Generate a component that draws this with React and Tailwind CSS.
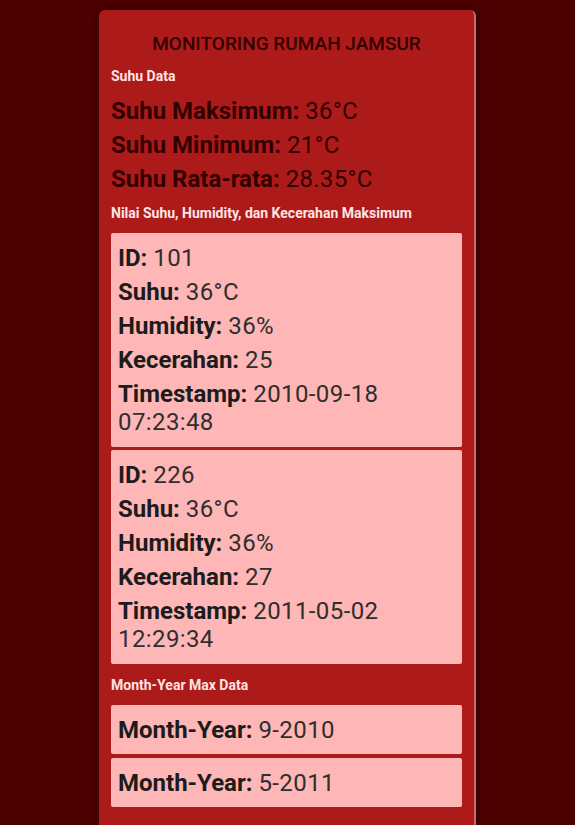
import React from "react";

const suhu = [
  { label: "Suhu Maksimum:", value: "36°C" },
  { label: "Suhu Minimum:", value: "21°C" },
  { label: "Suhu Rata-rata:", value: "28.35°C" },
];

const maxData = [
  { id: 101, suhu: 36, humidity: 36, kecerahan: 25, timestamp: "2010-09-18 07:23:48" },
  { id: 226, suhu: 36, humidity: 36, kecerahan: 27, timestamp: "2011-05-02 12:29:34" },
];

const monthYear = ["9-2010", "5-2011"];

const Row = ({ label, value }) => (
  <p className="leading-[28px]">
    <strong className="font-bold text-[#1c1c1c]">{label}</strong>{" "}
    <span className="text-[#2e2e2e] tracking-[0.4px]">{value}</span>
  </p>
);

export default function App() {
  return (
    <div
      className="min-h-screen bg-[#4d0000] flex justify-center pt-[10px] overflow-hidden"
      style={{ fontFamily: "Roboto, 'Noto Sans', sans-serif" }}
    >
      <div className="w-[377px] bg-[#ad1a1a] rounded-t-md border-r-2 border-[#c86a6a] shadow-[0_0_8px_rgba(0,0,0,0.5)] px-3 pt-[22px] pb-6">
        <h1 className="text-center text-[19px] leading-6 font-medium text-[#330000]">
          MONITORING RUMAH JAMSUR
        </h1>

        <h2 className="mt-[11px] text-[14px] leading-[18px] font-bold text-[#ffe4e4]">Suhu Data</h2>
        <div className="mt-3 flex flex-col gap-[6px] text-[24px] text-[#330000]">
          {suhu.map((s) => (
            <p key={s.label} className="leading-[28px]">
              <strong className="font-bold">{s.label}</strong>{" "}
              <span className="tracking-[0.3px]">{s.value}</span>
            </p>
          ))}
        </div>

        <h2 className="mt-[11px] text-[14px] leading-[18px] font-bold text-[#ffe4e4]">
          Nilai Suhu, Humidity, dan Kecerahan Maksimum
        </h2>
        <div className="mt-[11px] flex flex-col gap-[3px]">
          {maxData.map((d) => (
            <div
              key={d.id}
              className="bg-[#ffb6b6] rounded-[2px] px-[7px] pt-[11px] pb-[11px] flex flex-col gap-[6px] text-[24px]"
            >
              <Row label="ID:" value={d.id} />
              <Row label="Suhu:" value={`${d.suhu}°C`} />
              <Row label="Humidity:" value={`${d.humidity}%`} />
              <Row label="Kecerahan:" value={d.kecerahan} />
              <Row label="Timestamp:" value={d.timestamp} />
            </div>
          ))}
        </div>

        <h2 className="mt-3 text-[14px] leading-[18px] font-bold text-[#ffe4e4]">
          Month-Year Max Data
        </h2>
        <div className="mt-[11px] flex flex-col gap-1">
          {monthYear.map((m) => (
            <div key={m} className="bg-[#ffb6b6] rounded-[2px] px-[7px] pt-[11px] pb-[10px] text-[24px]">
              <Row label="Month-Year:" value={m} />
            </div>
          ))}
        </div>
      </div>
    </div>
  );
}
